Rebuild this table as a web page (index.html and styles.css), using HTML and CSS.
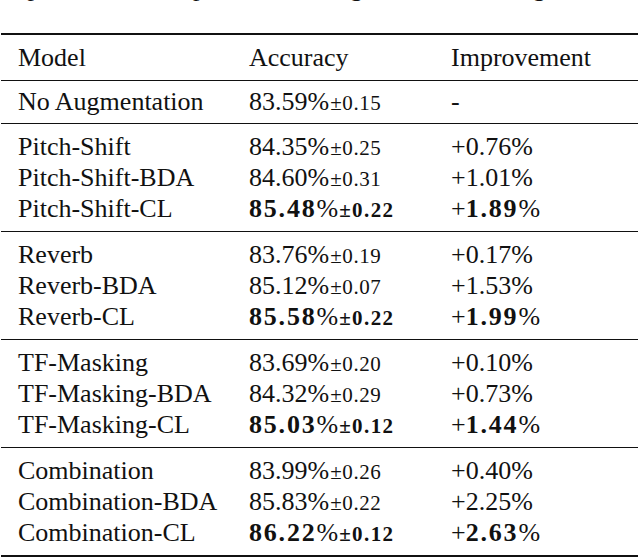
FILE: index.html
```html
<!DOCTYPE html>
<html>
<head>
<meta charset="utf-8">
<link rel="stylesheet" href="styles.css">
</head>
<body>
<div class="caption">improvement compared to no augmentation strategies and the</div>
<div class="tbl">
  <div class="sec head">
    <div class="row"><div>Model</div><div>Accuracy</div><div>Improvement</div></div>
  </div>
  <div class="sec single">
    <div class="row"><div>No Augmentation</div><div><span class="num">83.59%</span><span class="pm">±0.15</span></div><div>-</div></div>
  </div>
  <div class="sec">
    <div class="row"><div>Pitch-Shift</div><div><span class="num">84.35%</span><span class="pm">±0.25</span></div><div class="num">+0.76%</div></div>
    <div class="row"><div>Pitch-Shift-BDA</div><div><span class="num">84.60%</span><span class="pm">±0.31</span></div><div class="num">+1.01%</div></div>
    <div class="row"><div>Pitch-Shift-CL</div><div><span class="num"><b>85.48</b>%</span><span class="pm b">±0.22</span></div><div class="num">+<b>1.89</b>%</div></div>
  </div>
  <div class="sec">
    <div class="row"><div>Reverb</div><div><span class="num">83.76%</span><span class="pm">±0.19</span></div><div class="num">+0.17%</div></div>
    <div class="row"><div>Reverb-BDA</div><div><span class="num">85.12%</span><span class="pm">±0.07</span></div><div class="num">+1.53%</div></div>
    <div class="row"><div>Reverb-CL</div><div><span class="num"><b>85.58</b>%</span><span class="pm b">±0.22</span></div><div class="num">+<b>1.99</b>%</div></div>
  </div>
  <div class="sec">
    <div class="row"><div>TF-Masking</div><div><span class="num">83.69%</span><span class="pm">±0.20</span></div><div class="num">+0.10%</div></div>
    <div class="row"><div>TF-Masking-BDA</div><div><span class="num">84.32%</span><span class="pm">±0.29</span></div><div class="num">+0.73%</div></div>
    <div class="row"><div>TF-Masking-CL</div><div><span class="num"><b>85.03</b>%</span><span class="pm b">±0.12</span></div><div class="num">+<b>1.44</b>%</div></div>
  </div>
  <div class="sec last">
    <div class="row"><div>Combination</div><div><span class="num">83.99%</span><span class="pm">±0.26</span></div><div class="num">+0.40%</div></div>
    <div class="row"><div>Combination-BDA</div><div><span class="num">85.83%</span><span class="pm">±0.22</span></div><div class="num">+2.25%</div></div>
    <div class="row"><div>Combination-CL</div><div><span class="num"><b>86.22</b>%</span><span class="pm b">±0.12</span></div><div class="num">+<b>2.63</b>%</div></div>
  </div>
</div>
</body>
</html>
```

FILE: styles.css
```css
html, body {
  margin: 0;
  padding: 0;
  background: #fff;
}

body {
  color: #111;
  font-family: "Liberation Serif", "Times New Roman", serif;
  font-size: 26px;
  width: 640px;
  overflow: hidden;
}

.caption {
  white-space: nowrap;
  line-height: 30px;
  height: 30px;
  margin-top: -27px;
  word-spacing: 3px;
}

.tbl {
  margin: 30px 0 0 1px;
  width: 637px;
  border-top: 2px solid #111;
  border-bottom: 2px solid #111;
}

.sec {
  padding: 7px 0 7px;
  border-bottom: 1px solid #111;
}

.sec.head {
  padding: 7px 0 7px;
}

.sec.single {
  padding: 5px 0 6px;
}

.sec.last {
  border-bottom: none;
}

.row {
  display: grid;
  grid-template-columns: 231px 202px 1fr;
  padding-left: 17px;
  height: 31px;
  line-height: 31px;
  white-space: nowrap;
}

.num b {
  font-weight: bold;
  letter-spacing: 1.8px;
}

.pm {
  font-size: 21px;
  margin-left: 1px;
  letter-spacing: 0.6px;
}

.pm.b {
  font-weight: bold;
  letter-spacing: 1.4px;
}
```
